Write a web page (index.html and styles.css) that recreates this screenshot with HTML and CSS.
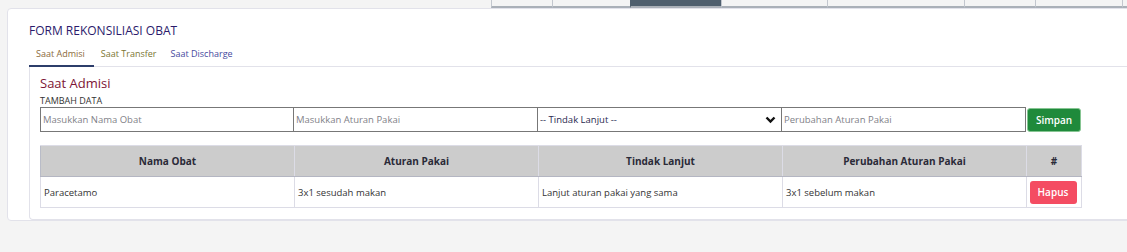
FILE: index.html
```html
<!DOCTYPE html>
<html lang="en">
<head>
    <meta charset="UTF-8">
    <meta name="viewport" content="width=device-width, initial-scale=1.0">
    <title>Rekonsiliasi Obat</title>
    <link rel="stylesheet" href="styles.css">
</head>
<body>
    <div class="topbar">
        <span class="top-btn w61"></span>
        <span class="top-btn w78"></span>
        <span class="top-btn w91 active"></span>
        <span class="top-btn w106"></span>
        <span class="top-btn w137"></span>
        <span class="top-btn w71"></span>
        <span class="top-btn w87"></span>
        <span class="top-btn w20"></span>
    </div>
    <div class="card">
        <h2 class="card-title">FORM REKONSILIASI OBAT</h2>
        <ul class="tabs">
            <li class="tab tab-admisi active">Saat Admisi</li>
            <li class="tab tab-transfer">Saat Transfer</li>
            <li class="tab tab-discharge">Saat Discharge</li>
        </ul>
        <div class="pane">
            <h3 class="pane-title">Saat Admisi</h3>
            <p class="label">TAMBAH DATA</p>
            <form class="form-row">
                <input type="text" placeholder="Masukkan Nama Obat">
                <input type="text" placeholder="Masukkan Aturan Pakai">
                <div class="select-wrap">
                    <select>
                        <option>-- Tindak Lanjut --</option>
                    </select>
                    <svg class="chevron" width="11" height="8" viewBox="0 0 11 8">
                        <path d="M1.5 1.5 L5.5 5.5 L9.5 1.5" fill="none" stroke="#111" stroke-width="2.4"/>
                    </svg>
                </div>
                <input type="text" placeholder="Perubahan Aturan Pakai">
                <button type="button" class="btn-simpan">Simpan</button>
            </form>
            <table class="data-table">
                <colgroup>
                    <col class="c-nama">
                    <col class="c-std">
                    <col class="c-std">
                    <col class="c-std">
                    <col class="c-aksi">
                </colgroup>
                <thead>
                    <tr>
                        <th>Nama Obat</th>
                        <th>Aturan Pakai</th>
                        <th>Tindak Lanjut</th>
                        <th>Perubahan Aturan Pakai</th>
                        <th>#</th>
                    </tr>
                </thead>
                <tbody>
                    <tr>
                        <td>Paracetamo</td>
                        <td>3x1 sesudah makan</td>
                        <td>Lanjut aturan pakai yang sama</td>
                        <td>3x1 sebelum makan</td>
                        <td class="aksi"><button type="button" class="btn-hapus">Hapus</button></td>
                    </tr>
                </tbody>
            </table>
        </div>
    </div>
</body>
</html>
```

FILE: styles.css
```css
* {
    box-sizing: border-box;
}

body {
    margin: 0;
    background-color: #f4f4f4;
    color: #333;
    font-family: "Open Sans", sans-serif;
    overflow: hidden;
}

.topbar {
    display: flex;
    height: 8px;
    padding-left: 491px;
}

.top-btn {
    display: block;
    flex-shrink: 0;
    height: 8px;
    background-color: #f4f4f4;
    border-left: 1px solid #c3c7ce;
    border-bottom: 2px solid #aab0b8;
}

.top-btn.active {
    background-color: #4f5f6e;
    border-color: #4f5f6e;
    border-bottom-color: #aab0b8;
}

.w61 { width: 61px; }
.w78 { width: 78px; }
.w91 { width: 91px; }
.w106 { width: 106px; }
.w137 { width: 137px; }
.w71 { width: 71px; }
.w87 { width: 87px; }
.w20 { width: 20px; }

.card {
    margin-left: 7px;
    width: 1140px;
    height: 213px;
    background-color: #fff;
    border: 1px solid #e2e2ea;
    border-radius: 4px;
    padding: 14px 0 0 21px;
}

.card-title {
    margin: 0;
    font-size: 12px;
    font-weight: 400;
    color: #2b1a6b;
    line-height: 16px;
}

.tabs {
    list-style: none;
    margin: 7px 0 0;
    padding: 0;
    display: flex;
    border-bottom: 1px solid #e2e2ea;
}

.tab {
    font-size: 9px;
    line-height: 12px;
    padding: 2px 7px 5px;
}

.tab.active {
    border-bottom: 2px solid #2c3d6a;
    margin-bottom: -1px;
}

.tab-admisi { color: #8a6a3c; padding-right: 9px; }
.tab-transfer { color: #7b7632; }
.tab-discharge { color: #464a9e; }

.pane {
    height: 153px;
    border-left: 1px solid #e2e2ea;
    border-bottom: 1px solid #e2e2ea;
    border-bottom-left-radius: 4px;
    padding: 8px 0 0 10px;
}

.pane-title {
    margin: 0;
    font-size: 13px;
    font-weight: 400;
    line-height: 17px;
    color: #7d1535;
}

.label {
    margin: 3px 0 0;
    font-size: 9px;
    line-height: 12px;
    color: #333;
}

.form-row {
    display: grid;
    grid-template-columns: 254px 244px 244px 244px 55px;
    height: 25px;
}

.form-row input,
.form-row select {
    display: block;
    width: 100%;
    height: 25px;
    margin: 0;
    border: 1px solid #777;
    border-left: none;
    border-radius: 0;
    padding: 0 2px;
    font-family: "Open Sans", sans-serif;
    font-size: 9.5px;
    color: #333;
    background-color: #fff;
    outline: none;
}

.form-row input:first-child {
    border-left: 1px solid #777;
}

.form-row input::placeholder {
    color: #7f7f88;
}

.select-wrap {
    position: relative;
    height: 25px;
}

.form-row select {
    appearance: none;
    color: #2a2a50;
}

.chevron {
    position: absolute;
    right: 6px;
    top: 9px;
}

.btn-simpan {
    margin: 1px 0 0 1px;
    height: 24px;
    background-color: #1f8a3b;
    color: #fff;
    border: 1px solid #86c592;
    border-radius: 3px;
    font-family: "Open Sans", sans-serif;
    font-size: 10px;
    font-weight: 600;
    padding: 0;
    cursor: pointer;
}

.data-table {
    margin-top: 13px;
    border-collapse: collapse;
    table-layout: fixed;
    width: 1041px;
    font-size: 9.5px;
}

.c-nama { width: 254px; }
.c-std { width: 244px; }
.c-aksi { width: 55px; }

.data-table th {
    height: 31px;
    background-color: #cccccc;
    color: #2a2a38;
    font-size: 10px;
    font-weight: 700;
    text-align: center;
    border: 1px solid #dcdce6;
    border-bottom: 1px solid #b4b6c2;
    border-left-color: #b9bcc8;
    padding: 0 4px;
}

.data-table td {
    height: 31px;
    border: 1px solid #dcdce6;
    padding: 0 3px;
    color: #333;
}

.data-table td.aksi {
    text-align: center;
    padding: 0;
}

.btn-hapus {
    width: 47px;
    height: 23px;
    margin-right: 2px;
    background-color: #f44c62;
    color: #fff;
    border: none;
    border-radius: 3px;
    font-family: "Open Sans", sans-serif;
    font-size: 10px;
    font-weight: 600;
    padding: 0;
    cursor: pointer;
}
```
